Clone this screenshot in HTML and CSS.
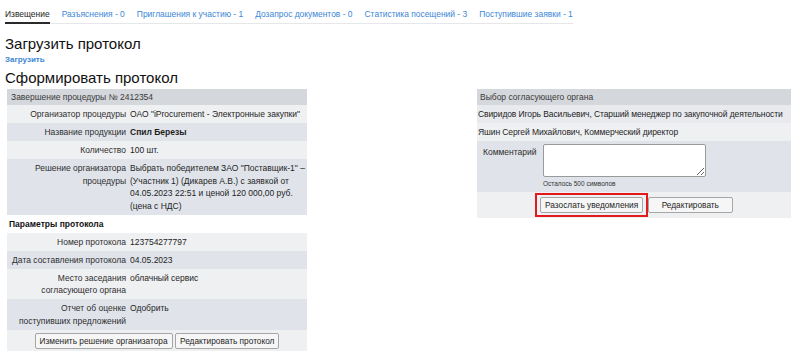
FILE: index.html
```html
<!DOCTYPE html>
<html lang="ru">
<head>
<meta charset="utf-8">
<title>Извещение</title>
<link rel="stylesheet" href="styles.css">
</head>
<body>
<nav class="tabs">
  <a class="tab active">Извещение</a>
  <a class="tab">Разъяснения - 0</a>
  <a class="tab">Приглашения к участию - 1</a>
  <a class="tab">Дозапрос документов - 0</a>
  <a class="tab">Статистика посещений - 3</a>
  <a class="tab">Поступившие заявки - 1</a>
</nav>

<h2 class="title title-upload">Загрузить протокол</h2>
<a class="upload-link">Загрузить</a>
<h2 class="title title-form">Сформировать протокол</h2>

<div class="columns">
  <table class="grid left">
    <tr class="head"><th colspan="2">Завершение процедуры № 2412354</th></tr>
    <tr class="light"><td class="lbl">Организатор процедуры</td><td class="val">ОАО "iProcurement - Электронные закупки"</td></tr>
    <tr class="dark"><td class="lbl">Название продукции</td><td class="val"><b>Спил Березы</b></td></tr>
    <tr class="light"><td class="lbl">Количество</td><td class="val">100 шт.</td></tr>
    <tr class="dark"><td class="lbl">Решение организатора<br>процедуры</td><td class="val">Выбрать победителем ЗАО "Поставщик-1" –<br>(Участник 1) (Дикарев А.В.) с заявкой от<br>04.05.2023 22:51 и ценой 120 000,00 руб.<br>(цена с НДС)</td></tr>
    <tr class="blank"><td colspan="2" class="section">Параметры протокола</td></tr>
    <tr class="light"><td class="lbl">Номер протокола</td><td class="val">123754277797</td></tr>
    <tr class="dark"><td class="lbl">Дата составления протокола</td><td class="val">04.05.2023</td></tr>
    <tr class="light"><td class="lbl">Место заседания<br>согласующего органа</td><td class="val">облачный сервис</td></tr>
    <tr class="dark"><td class="lbl">Отчет об оценке<br>поступивших предложений</td><td class="val">Одобрить</td></tr>
    <tr class="light"><td colspan="2" class="actions">
      <button class="btn">Изменить решение организатора</button>
      <button class="btn">Редактировать протокол</button>
    </td></tr>
  </table>

  <table class="grid right">
    <tr class="head"><th>Выбор согласующего органа</th></tr>
    <tr class="mid"><td class="person">Свиридов Игорь Васильевич, Старший менеджер по закупочной деятельности</td></tr>
    <tr class="light"><td class="person">Яшин Сергей Михайлович, Коммерческий директор</td></tr>
    <tr class="dark"><td class="comment-cell">
      <div class="comment">
        <span class="comment-label">Комментарий</span>
        <div class="comment-field">
          <textarea class="comment-input"></textarea>
          <span class="remain">Осталось 500 символов</span>
        </div>
      </div>
    </td></tr>
    <tr class="light"><td class="actions actions-right">
      <span class="highlight"><button class="btn btn-send">Разослать уведомления</button></span>
      <button class="btn btn-edit">Редактировать</button>
    </td></tr>
  </table>
</div>
</body>
</html>
```

FILE: styles.css
```css
html, body {
  margin: 0;
  padding: 0;
  background: #ffffff;
}

body {
  padding: 0 5px;
  font-family: "Liberation Sans", Arial, sans-serif;
  color: #222;
}

.tabs {
  display: flex;
  align-items: flex-end;
  gap: 12px;
  width: 568px;
  border-bottom: 1px solid #e6e7e9;
}

.tab {
  font-size: 8.45px;
  line-height: 10px;
  padding: 9px 0 3px;
  border-bottom: 2px solid transparent;
  margin-bottom: -1px;
  color: #3b87d5;
  white-space: nowrap;
}

.tab.active {
  color: #1d1d1d;
  border-bottom-color: #2a2a2a;
}

.title {
  font-size: 15px;
  font-weight: normal;
  line-height: 18px;
  color: #111;
  margin: 0;
}

.title-upload {
  margin-top: 11px;
}

.upload-link {
  display: block;
  margin-top: 2px;
  font-size: 8px;
  line-height: 10px;
  font-weight: bold;
  color: #3b87d5;
}

.title-form {
  margin-top: 4px;
}

.columns {
  display: flex;
  align-items: flex-start;
  gap: 170px;
  margin-top: 2px;
  padding-left: 2px;
}

.grid {
  border-collapse: collapse;
  border-spacing: 0;
  font-size: 8.5px;
  line-height: 12.5px;
}

.grid.left {
  width: 300px;
}

.grid.right {
  width: 314px;
}

.grid td,
.grid th {
  padding: 3px 2px 2.5px;
  vertical-align: top;
}

.head th {
  background: #d4d7dc;
  color: #3a3a3a;
  font-weight: normal;
  text-align: left;
  padding: 2px 4px 1.5px;
}

.right .head th {
  padding-left: 3px;
}

.light {
  background: #eff0f2;
}

.mid {
  background: #e8eaee;
}

.dark {
  background: #e0e4ea;
}

.blank {
  background: #ffffff;
}

.lbl {
  width: 117px;
  text-align: right;
  color: #2e2e2e;
}

.val {
  padding-left: 3px;
  color: #1e1e1e;
}

.section {
  font-weight: bold;
  padding-left: 3px;
  color: #111;
}

.grid td.person {
  padding-left: 1px;
  padding-right: 0;
  white-space: nowrap;
  letter-spacing: -0.1px;
  color: #1e1e1e;
}

.actions {
  text-align: center;
  padding: 4px 0 4px;
}

.btn {
  font-family: "Liberation Sans", Arial, sans-serif;
  font-size: 8.3px;
  line-height: 10px;
  height: 16px;
  padding: 0 4px;
  margin: 0;
  color: #1e1e1e;
  background: #f6f6f6;
  border: 1px solid #a6a6a6;
  border-radius: 2px;
  white-space: nowrap;
  vertical-align: middle;
}

.grid td.actions-right {
  padding: 1px 0 1px;
}

.highlight {
  display: inline-block;
  vertical-align: middle;
  border: 2px solid #e3191c;
  padding: 2px 3px;
  line-height: 0;
}

.btn-send {
  padding: 0 4px;
}

.btn-edit {
  padding: 0 13px;
  margin-left: -3px;
}

.grid td.comment-cell {
  padding: 3px 0 3px 6px;
}

.comment {
  display: flex;
  gap: 6px;
}

.comment-label {
  padding-top: 2px;
  width: 54px;
  color: #2e2e2e;
}

.comment-field {
  display: flex;
  flex-direction: column;
}

.comment-input {
  width: 163px;
  height: 33px;
  box-sizing: border-box;
  margin: 0;
  border: 1px solid #9a9a9a;
  border-radius: 2px;
  background: #fff;
}

.remain {
  font-size: 6.5px;
  line-height: 10px;
  margin-top: 2px;
  color: #333;
}
```
